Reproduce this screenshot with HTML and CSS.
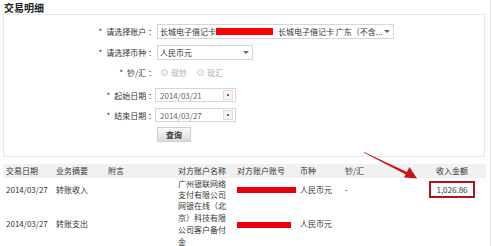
FILE: index.html
```html
<!DOCTYPE html>
<html lang="zh-CN">
<head>
    <meta charset="UTF-8">
    <title>交易明细</title>
    <link rel="stylesheet" href="styles.css">
</head>
<body>
    <div class="page">
        <h1 class="page-title">交易明细</h1>
        <div class="panel">
            <div class="row">
                <div class="label"><span class="star">*</span>请选择账户 ：</div>
                <div class="select select-wide">
                    <span>长城电子借记卡</span>
                    <span class="mask"></span>
                    <span>长城电子借记卡 广东（不含...</span>
                    <span class="caret"></span>
                </div>
            </div>
            <div class="row">
                <div class="label"><span class="star">*</span>请选择币种 ：</div>
                <div class="select select-narrow">
                    <span>人民币元</span>
                    <span class="caret"></span>
                </div>
            </div>
            <div class="row row-radio">
                <div class="label"><span class="star">*</span>钞/汇 ：</div>
                <div class="radios">
                    <span class="radio"></span><span class="radio-text">现钞</span>
                    <span class="radio"></span><span class="radio-text">现汇</span>
                </div>
            </div>
            <div class="row row-date">
                <div class="label"><span class="star">*</span>起始日期 ：</div>
                <div class="date-input">
                    <span>2014/03/21</span>
                    <span class="cal"><i></i></span>
                </div>
            </div>
            <div class="row row-date">
                <div class="label"><span class="star">*</span>结束日期 ：</div>
                <div class="date-input">
                    <span>2014/03/27</span>
                    <span class="cal"><i></i></span>
                </div>
            </div>
            <div class="row row-button">
                <div class="label"></div>
                <a href="#" class="button">查询</a>
            </div>
        </div>

        <table class="records">
            <colgroup>
                <col style="width:50px">
                <col style="width:52px">
                <col style="width:70px">
                <col style="width:59px">
                <col style="width:63px">
                <col style="width:45px">
                <col style="width:76px">
                <col style="width:68px">
            </colgroup>
            <thead>
                <tr>
                    <th>交易日期</th>
                    <th>业务摘要</th>
                    <th>附言</th>
                    <th>对方账户名称</th>
                    <th>对方账户账号</th>
                    <th>币种</th>
                    <th>钞/汇</th>
                    <th class="amount">收入金额</th>
                </tr>
            </thead>
            <tbody>
                <tr class="first">
                    <td>2014/03/27</td>
                    <td>转账收入</td>
                    <td></td>
                    <td>广州银联网络支付有限公司</td>
                    <td><span class="mask mask-row"></span></td>
                    <td>人民币元</td>
                    <td>-</td>
                    <td class="amount"><span class="highlight">1,026.86</span></td>
                </tr>
                <tr>
                    <td>2014/03/27</td>
                    <td>转账支出</td>
                    <td></td>
                    <td>网银在线（北京）科技有限公司客户备付金</td>
                    <td><span class="mask mask-row short"></span></td>
                    <td>人民币元</td>
                    <td></td>
                    <td class="amount"></td>
                </tr>
            </tbody>
        </table>
    </div>

    <!-- red annotation arrow drawn over the table -->
    <svg class="arrow" width="492" height="246" viewBox="0 0 492 246">
        <polygon points="364,152 408,172.5 406.8,175 364,152.8" fill="#c8121c"/>
        <polygon points="417,178.5 404,177.5 409.5,167" fill="#c8121c"/>
    </svg>
</body>
</html>
```

FILE: styles.css
```css
body {
    margin: 0;
    font-family: "Noto Sans CJK SC", "Liberation Sans", sans-serif;
    font-size: 8px;
    color: #333;
    background: #fff;
    position: relative;
    width: 492px;
    height: 246px;
    overflow: hidden;
}
.page {
    width: 490px;
    height: 246px;
    border-right: 1px solid #e2e2e2;
}
.page-title {
    margin: 0;
    padding: 1px 0 0 4px;
    height: 13px;
    line-height: 13px;
    font-size: 10px;
    font-weight: bold;
    color: #222;
}
.panel {
    margin: 0 5px 0 3px;
    border: 1px solid #e8e8e8;
    padding: 9px 0 14px;
}
.row {
    display: flex;
    align-items: center;
    height: 15px;
    margin-top: 6px;
}
.row:first-child {
    margin-top: 0;
}
.label {
    flex: none;
    width: 152px;
    text-align: right;
    line-height: 15px;
    margin-right: 1px;
}
.star {
    margin-right: 4px;
}
.select {
    box-sizing: border-box;
    height: 15px;
    border: 1px solid #d6d6d6;
    display: flex;
    align-items: center;
    padding: 0 3px 0 2px;
    white-space: nowrap;
}
.select-wide {
    width: 237px;
}
.select-narrow {
    width: 96px;
}
.caret {
    margin-left: auto;
    width: 0;
    height: 0;
    border-left: 3px solid transparent;
    border-right: 3px solid transparent;
    border-top: 3px solid #666;
}
.mask {
    display: inline-block;
    width: 57px;
    height: 7px;
    background: #f00;
    margin: 0 5px 0 0;
}
.mask-row {
    width: 59px;
    height: 6px;
    background: #e8000b;
    vertical-align: middle;
}
.mask-row.short {
    width: 54px;
}
.row-radio {
    height: 12px;
}
.radios {
    display: flex;
    align-items: center;
    color: #aaa;
    padding-left: 4px;
}
.radio {
    box-sizing: border-box;
    width: 7px;
    height: 7px;
    border: 1px solid #ccc;
    border-radius: 50%;
    background: #f4f4f4;
}
.radio-text {
    margin: 0 10px 0 3px;
}
.row-date {
    height: 14px;
    margin-top: 10px;
}
.row-date + .row-date {
    margin-top: 6px;
}
.date-input {
    box-sizing: border-box;
    width: 81px;
    height: 14px;
    margin-left: -2px;
    border: 1px solid #d6d6d6;
    display: flex;
    align-items: center;
    padding-left: 4px;
    color: #666;
}
.cal {
    margin-left: auto;
    margin-right: 2px;
    box-sizing: border-box;
    width: 10px;
    height: 10px;
    border: 1px solid #ddd;
    background: #f6f6f6;
    display: flex;
    align-items: center;
    justify-content: center;
}
.cal i {
    width: 2px;
    height: 2px;
    background: #b44;
}
.row-button {
    margin-top: 5px;
}
.button {
    box-sizing: border-box;
    width: 34px;
    height: 15px;
    line-height: 13px;
    text-align: center;
    border: 1px solid #cfcfcf;
    background: linear-gradient(#fbfbfb, #dadada);
    color: #333;
    font-weight: bold;
    text-decoration: none;
}
.records {
    margin: 7px 0 0 3px;
    width: 483px;
    border-collapse: collapse;
    table-layout: fixed;
}
.records th {
    background: #f1f1f1;
    font-weight: normal;
    text-align: left;
    height: 14px;
    line-height: 14px;
    padding: 0 0 0 3px;
    white-space: nowrap;
}
.records td {
    padding: 0 5px 0 3px;
    line-height: 12px;
    vertical-align: middle;
}
.records .first td {
    line-height: 11px;
}
.records .amount {
    text-align: center;
    padding: 0;
}
.highlight {
    display: inline-block;
    border: 2px solid #b3141c;
    padding: 0 5px;
    line-height: 13px;
}
.arrow {
    position: absolute;
    left: 0;
    top: 0;
    pointer-events: none;
}
```
